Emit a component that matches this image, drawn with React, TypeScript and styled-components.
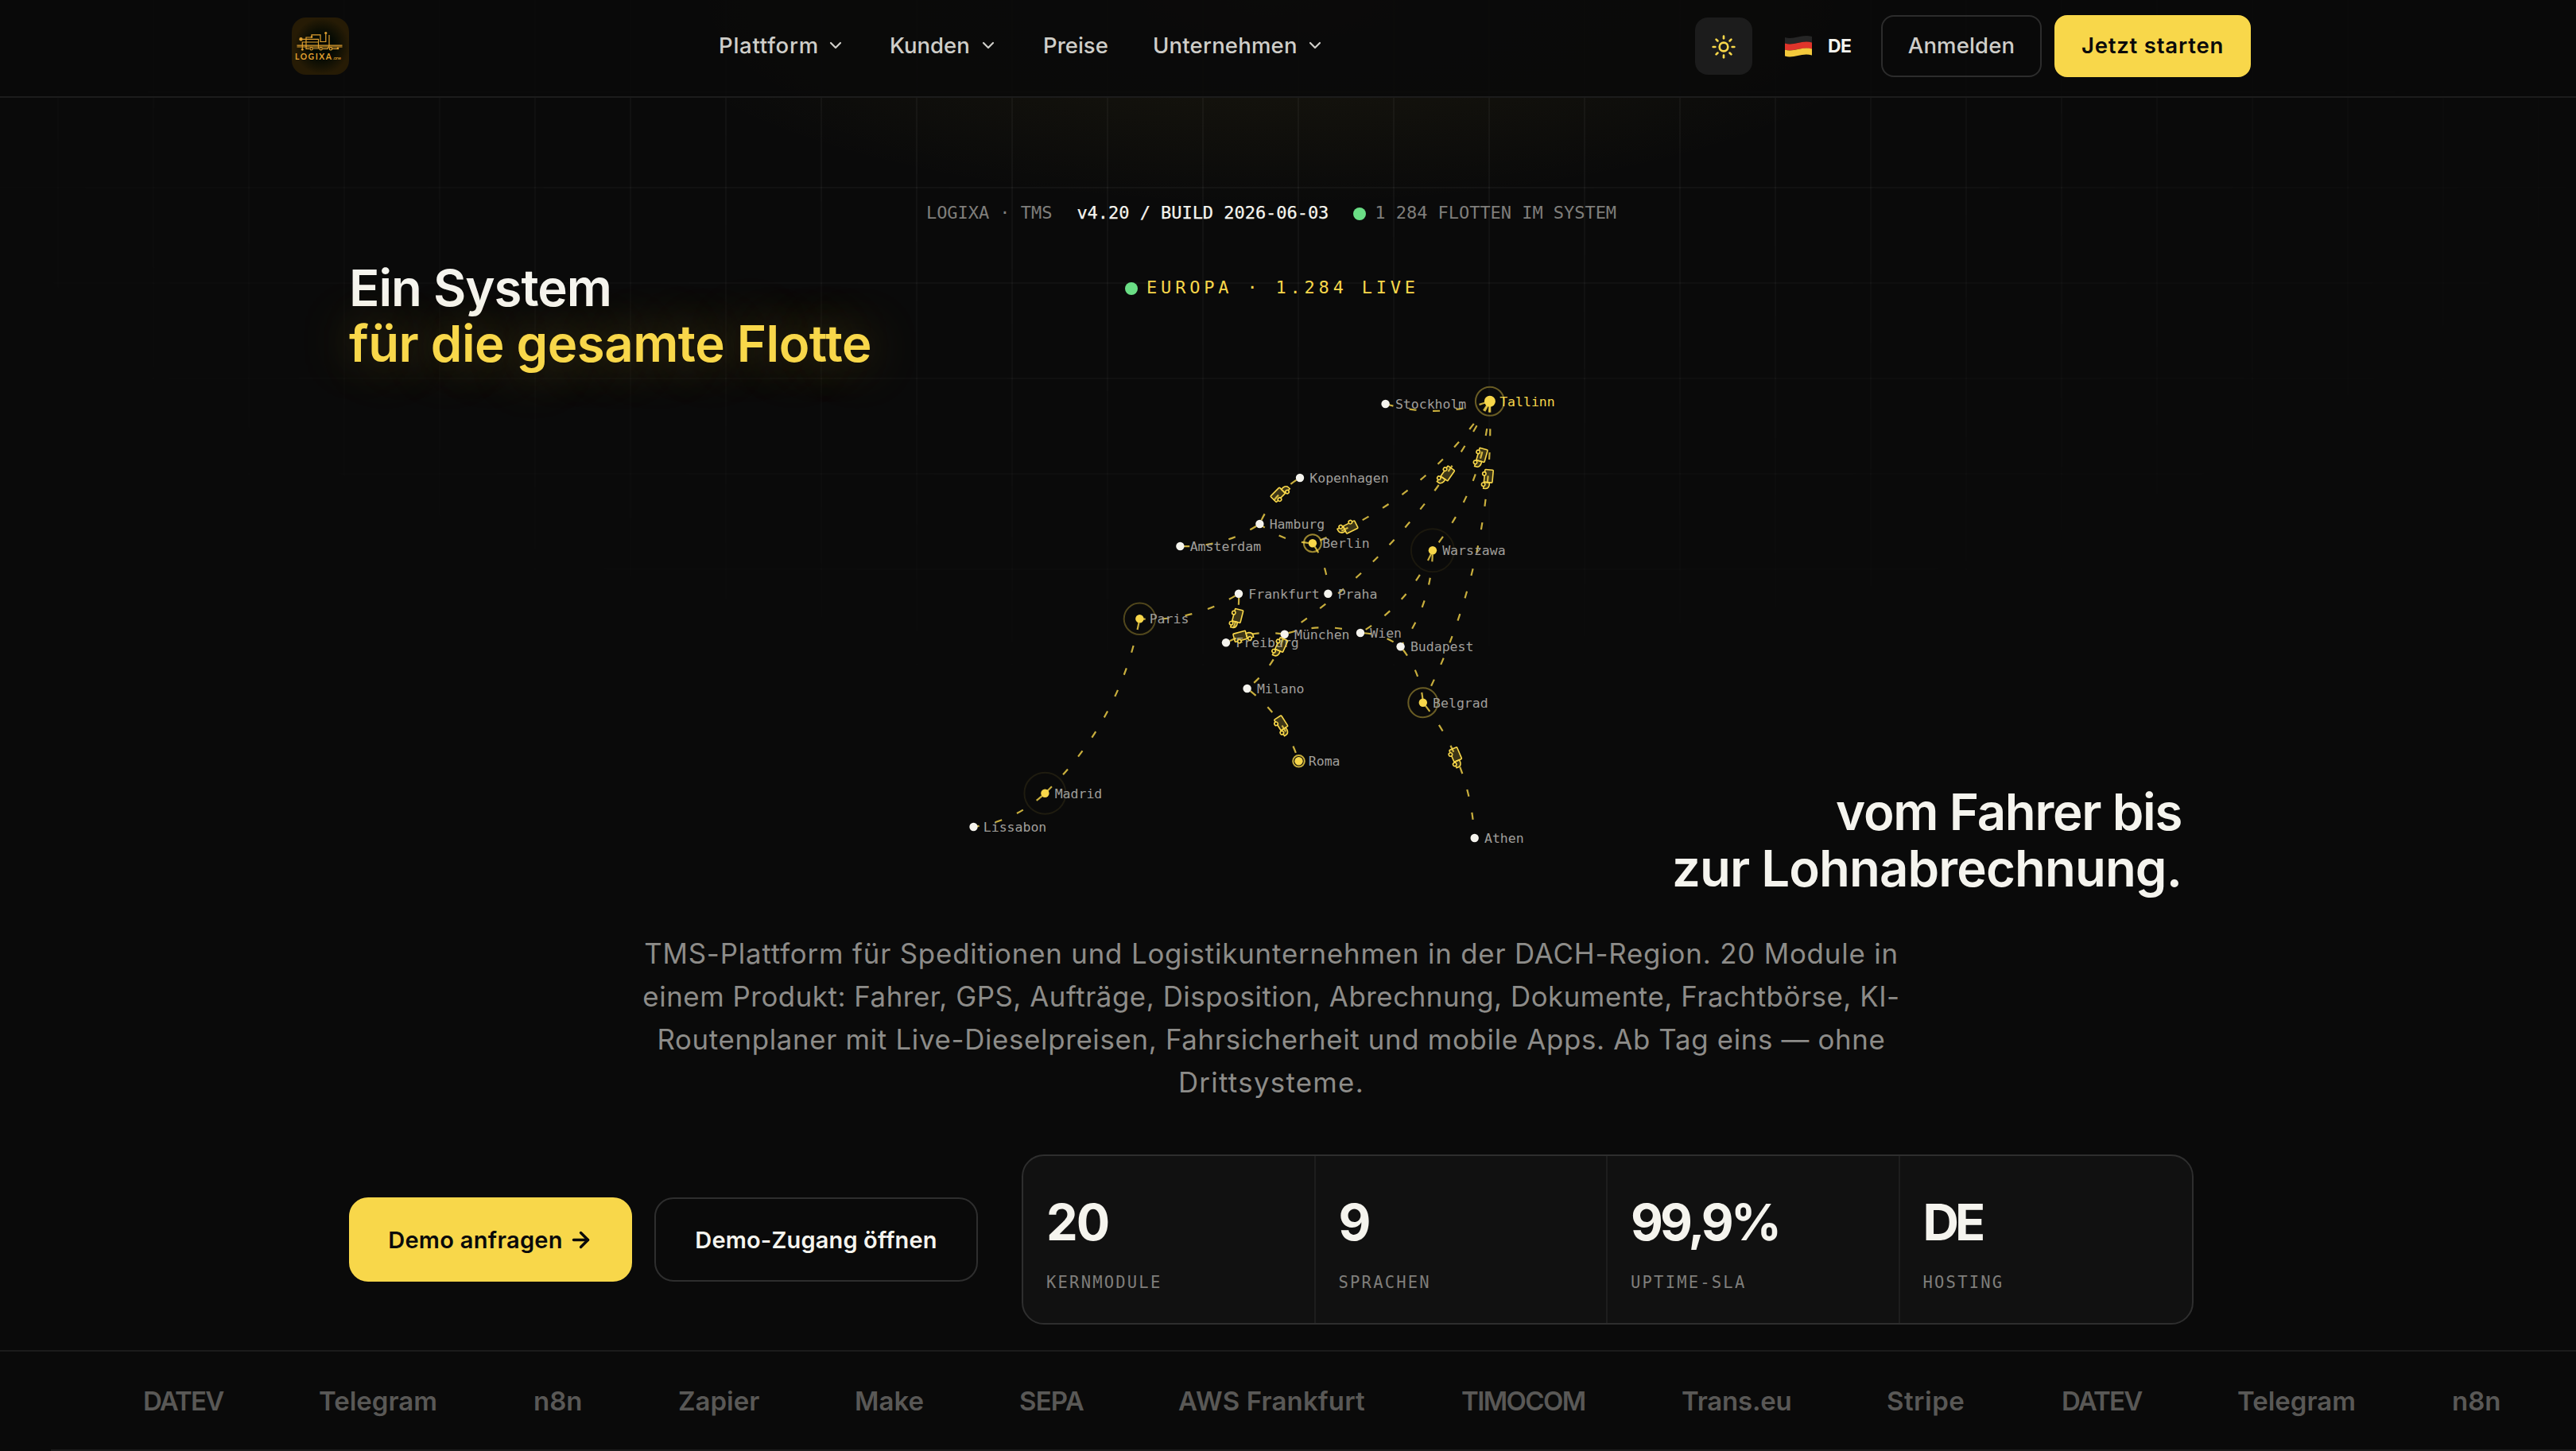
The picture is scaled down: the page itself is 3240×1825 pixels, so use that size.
import React from 'react';
import styled, { createGlobalStyle } from 'styled-components';
import { ArrowRight, ChevronDown, Sun } from 'lucide-react';

const YELLOW = '#f8d74a';
const INK = '#0a0a0a';
const PAPER = '#f5f4ee';
const GREEN = '#6ade85';
const SANS = `Inter, 'Open Sans', sans-serif`;
const MONO = `'DejaVu Sans Mono', 'Liberation Mono', monospace`;

const GlobalStyle = createGlobalStyle`
  * { box-sizing: border-box; }
  body {
    margin: 0;
    background: ${INK};
    color: ${PAPER};
    font-family: ${SANS};
    overflow: hidden;
  }
`;

const Page = styled.div`
  position: relative;
  display: flex;
  flex-direction: column;
  width: 3240px;
  height: 1825px;
  overflow: hidden;
`;

const Backdrop = styled.div`
  position: absolute;
  inset: 0;
  background-image:
    linear-gradient(to right, rgba(255, 255, 255, 0.04) 2px, transparent 2px),
    linear-gradient(to bottom, rgba(255, 255, 255, 0.04) 2px, transparent 2px);
  background-size: 120px 120px;
  background-position: 72px -5px;
  mask-image: radial-gradient(ellipse 1900px 920px at 1599px 0, #000 30%, transparent 100%);
`;

const Glow = styled.div`
  position: absolute;
  inset: 0;
  background: radial-gradient(ellipse 820px 260px at 1599px 0, rgba(248, 215, 74, 0.075), transparent 100%);
`;

/* header */

const Header = styled.header`
  position: relative;
  display: flex;
  justify-content: space-between;
  align-items: center;
  height: 123px;
  padding: 0 409px 5px 367px;
  background: rgba(10, 10, 10, 0.92);
  border-bottom: 2px solid #1c1c1c;
`;

const Logo = styled.svg`
  width: 72px;
  height: 72px;
  border-radius: 18px;
`;

const Nav = styled.nav`
  display: flex;
  align-items: center;
  width: 1228px;
  margin-left: 465px;
  padding-bottom: 2px;
`;

const NavItem = styled.a<{ $width: number; $gap: number; $ls: number }>`
  display: flex;
  align-items: center;
  justify-content: space-between;
  flex: none;
  width: ${p => p.$width}px;
  margin-right: ${p => p.$gap}px;
  font-size: 27.5px;
  font-weight: 500;
  letter-spacing: ${p => p.$ls}px;
  color: #cfcec9;

  svg {
    margin-right: -4px;
  }
`;

const Actions = styled.div`
  display: flex;
  align-items: center;
`;

const ThemeButton = styled.button`
  display: flex;
  align-items: center;
  justify-content: center;
  width: 72px;
  height: 72px;
  padding: 2px 0 0;
  border: 0;
  border-radius: 16px;
  background: #1c1c1c;
  color: ${YELLOW};
`;

const Language = styled.div`
  display: flex;
  align-items: center;
  width: 162px;
  padding-left: 40px;
  gap: 19px;
  font-size: 23px;
  font-weight: 700;
  letter-spacing: -0.5px;
`;

const HeaderButton = styled.button<{ $primary?: boolean; $width: number; $ls: number }>`
  width: ${p => p.$width}px;
  height: 78px;
  margin-right: ${p => (p.$primary ? 0 : 16)}px;
  padding: 0 0 2px;
  border: 2px solid ${p => (p.$primary ? YELLOW : '#2c2c2c')};
  border-radius: 16px;
  background: ${p => (p.$primary ? YELLOW : 'transparent')};
  color: ${p => (p.$primary ? INK : '#cfcec9')};
  font-family: inherit;
  font-size: 27.5px;
  font-weight: ${p => (p.$primary ? 600 : 500)};
  letter-spacing: ${p => p.$ls}px;
  white-space: nowrap;
`;

/* hero */

const Hero = styled.main`
  position: relative;
  display: flex;
  flex-direction: column;
  align-items: center;
  width: 2320px;
  margin-left: 439px;
  padding-top: 129px;
`;

const MonoLine = styled.div<{ $color: string; $ls: number; $gap: number }>`
  display: flex;
  align-items: center;
  gap: ${p => p.$gap}px;
  height: 32px;
  font-family: ${MONO};
  font-size: 22px;
  line-height: 32px;
  letter-spacing: ${p => p.$ls}px;
  color: ${p => p.$color};
  white-space: pre;

  b {
    font-weight: 400;
    color: ${PAPER};
    -webkit-text-stroke: 0.25px ${PAPER};
  }
`;

const Live = styled.span`
  display: flex;
  align-items: center;
  gap: 11px;
`;

const Dot = styled.i`
  width: 16px;
  height: 16px;
  margin-top: 2px;
  border-radius: 50%;
  background: ${GREEN};
`;

const Stage = styled.div`
  display: grid;
  grid-template-columns: 751px 820px 749px;
  width: 2320px;
  height: 843px;
  padding-top: 43px;
`;

const Heading = styled.h1<{ $end?: boolean }>`
  align-self: ${p => (p.$end ? 'end' : 'start')};
  margin: 0;
  padding-right: ${p => (p.$end ? 15 : 0)}px;
  text-align: ${p => (p.$end ? 'right' : 'left')};
  font-size: 63.5px;
  font-weight: 600;
  line-height: 70.3px;
  white-space: nowrap;
`;

const HeadingLine = styled.span<{ $ls: number; $glow?: boolean }>`
  display: block;
  letter-spacing: ${p => p.$ls}px;
  color: ${p => (p.$glow ? YELLOW : PAPER)};
  text-shadow: ${p => (p.$glow ? '0 0 64px rgba(248, 215, 74, 0.35)' : 'none')};
`;

const MapColumn = styled.div`
  display: flex;
  flex-direction: column;
  align-items: center;
  padding-top: 19px;
`;

const MapSvg = styled.svg`
  width: 820px;
  height: 660px;
  margin-top: 52px;
  flex-shrink: 0;
`;

const Lead = styled.p`
  display: flex;
  flex-direction: column;
  align-items: center;
  margin: 45px 0 0;
  font-size: 34.8px;
  font-weight: 400;
  line-height: 54px;
  color: #8d8c89;
  white-space: nowrap;
`;

const LeadLine = styled.span<{ $ls: number }>`
  letter-spacing: ${p => p.$ls}px;
`;

const CtaRow = styled.div`
  display: flex;
  align-items: center;
  width: 2320px;
  margin-top: 64px;
`;

const CtaButton = styled.button<{ $primary?: boolean; $width: number; $ls: number }>`
  display: flex;
  align-items: center;
  justify-content: center;
  gap: 7px;
  width: ${p => p.$width}px;
  height: 106px;
  margin-right: 28px;
  padding: 0;
  border: 2px solid ${p => (p.$primary ? YELLOW : '#2e2e2e')};
  border-radius: 24px;
  background: ${p => (p.$primary ? YELLOW : 'transparent')};
  color: ${p => (p.$primary ? INK : PAPER)};
  font-family: inherit;
  font-size: 29px;
  font-weight: 600;
  letter-spacing: ${p => p.$ls}px;
  white-space: nowrap;
`;

const Stats = styled.div`
  display: grid;
  grid-template-columns: repeat(4, 1fr);
  width: 1474px;
  height: 214px;
  margin-left: 27px;
  border: 2px solid #2e2e2e;
  border-radius: 28px;
  background: #111;
`;

const Stat = styled.div`
  padding: 51px 0 0 29px;
  border-right: 2px solid #1e1e1e;

  &:last-child {
    border-right: 0;
  }
`;

const StatValue = styled.div<{ $ls: number }>`
  font-size: 63px;
  font-weight: 700;
  line-height: 64px;
  letter-spacing: ${p => p.$ls}px;
`;

const StatLabel = styled.div`
  margin-top: 30px;
  font-family: ${MONO};
  font-size: 20.5px;
  line-height: 28px;
  letter-spacing: 2.2px;
  color: #7f7e7b;
`;

/* integrations strip */

const Strip = styled.div`
  position: relative;
  display: flex;
  align-items: center;
  height: 127px;
  margin-top: 32px;
  padding: 0 0 2px 180px;
  border-top: 2px solid #1c1c1c;
  background: linear-gradient(#1c1c1c, #1c1c1c) 64px 100% / 100% 2px no-repeat;
`;

const StripItem = styled.span<{ $width: number; $ls: number }>`
  flex: none;
  width: ${p => p.$width}px;
  font-size: 33px;
  font-weight: 600;
  letter-spacing: ${p => p.$ls}px;
  color: #595856;
  white-space: nowrap;
`;

type City = {
  x: number;
  y: number;
  ring?: number;
  ringOpacity?: number;
};

const cities: Record<string, City> = {
  Stockholm: { x: 1742.6, y: 508 },
  Tallinn: { x: 1873.9, y: 504.7, ring: 18, ringOpacity: 0.4 },
  Kopenhagen: { x: 1635, y: 601 },
  Hamburg: { x: 1584.4, y: 659 },
  Amsterdam: { x: 1484.4, y: 687 },
  Berlin: { x: 1650.9, y: 683.3, ring: 11, ringOpacity: 0.6 },
  Warszawa: { x: 1801.9, y: 692.3, ring: 27, ringOpacity: 0.07 },
  Frankfurt: { x: 1558, y: 746.7 },
  Praha: { x: 1670.4, y: 746.7 },
  Paris: { x: 1433.4, y: 778.3, ring: 19.7, ringOpacity: 0.3 },
  München: { x: 1615.7, y: 797.7 },
  Wien: { x: 1711, y: 796 },
  Freiburg: { x: 1542, y: 808.3 },
  Budapest: { x: 1761.6, y: 813.3 },
  Milano: { x: 1568.6, y: 866 },
  Belgrad: { x: 1789.8, y: 883.7, ring: 18.5, ringOpacity: 0.4 },
  Roma: { x: 1633.5, y: 957.3, ring: 7.3, ringOpacity: 0.8 },
  Madrid: { x: 1314.4, y: 997.7, ring: 26, ringOpacity: 0.09 },
  Lissabon: { x: 1224.5, y: 1040 },
  Athen: { x: 1854.7, y: 1054 },
};

// from, to, position of the truck on the route (0..1)
const routes: [string, string, number?][] = [
  ['Tallinn', 'Stockholm'],
  ['Tallinn', 'Berlin', 0.838],
  ['Tallinn', 'München', 0.2745],
  ['Tallinn', 'Warszawa', 0.352],
  ['Tallinn', 'Belgrad', 0.248],
  ['Hamburg', 'Kopenhagen', 0.605],
  ['Hamburg', 'Amsterdam'],
  ['Berlin', 'Hamburg'],
  ['Berlin', 'Praha'],
  ['Frankfurt', 'Paris'],
  ['Frankfurt', 'Freiburg', 0.49],
  ['Freiburg', 'München', 0.307],
  ['München', 'Wien'],
  ['München', 'Milano', 0.208],
  ['Milano', 'Roma', 0.571],
  ['Warszawa', 'Wien'],
  ['Warszawa', 'Budapest'],
  ['Wien', 'Budapest'],
  ['Budapest', 'Belgrad'],
  ['Belgrad', 'Athen', 0.437],
  ['Paris', 'Madrid'],
  ['Madrid', 'Lissabon'],
];

const bend = (a: City, b: City) => {
  const dx = b.x - a.x;
  const dy = b.y - a.y;
  const len = Math.hypot(dx, dy);
  const k = Math.min(len * 0.16, 50) / len;
  return { x: (a.x + b.x) / 2 + dy * k, y: (a.y + b.y) / 2 - dx * k };
};

const Truck: React.FC<{ from: City; to: City; t: number }> = ({ from, to, t }) => {
  const c = bend(from, to);
  const u = 1 - t;
  const x = u * u * from.x + 2 * u * t * c.x + t * t * to.x;
  const y = u * u * from.y + 2 * u * t * c.y + t * t * to.y;
  const angle =
    (Math.atan2(u * (c.y - from.y) + t * (to.y - c.y), u * (c.x - from.x) + t * (to.x - c.x)) * 180) / Math.PI;

  return (
    <g
      transform={`translate(${x} ${y}) rotate(${angle})`}
      fill="rgba(248, 215, 74, 0.22)"
      stroke={YELLOW}
      strokeWidth="1.6"
    >
      <rect x="-12" y="-6" width="16" height="10.5" rx="1" />
      <path d="M4 -2.5 H7.5 Q12 -1.5 12 2 V4.5 H4 Z" />
      <circle cx="-6.5" cy="5" r="2.2" fill={INK} />
      <circle cx="7" cy="5" r="2.2" fill={INK} />
    </g>
  );
};

const EuropeMap: React.FC = () => (
  <MapSvg viewBox="1190 430 820 660">
    {routes.map(([from, to]) => {
      const a = cities[from];
      const b = cities[to];
      const c = bend(a, b);
      return (
        <path
          key={from + to}
          d={`M${a.x} ${a.y} Q${c.x} ${c.y} ${b.x} ${b.y}`}
          fill="none"
          stroke={YELLOW}
          strokeOpacity="0.8"
          strokeWidth="2.2"
          strokeDasharray="9 20.6"
          strokeDashoffset="-5"
        />
      );
    })}
    {Object.entries(cities).map(([name, c]) => {
      const capital = name === 'Tallinn';
      return (
        <g key={name}>
          {c.ring && (
            <circle cx={c.x} cy={c.y} r={c.ring} fill="none" stroke={YELLOW} strokeOpacity={c.ringOpacity} strokeWidth="2" />
          )}
          <circle cx={c.x} cy={c.y} r={capital ? 7 : 5.2} fill={c.ring ? YELLOW : PAPER} />
          <text
            x={c.x + 12.3}
            y={c.y + 5.9}
            fontFamily={MONO}
            fontSize="16.5"
            fill={capital ? YELLOW : '#a09f9b'}
          >
            {name}
          </text>
        </g>
      );
    })}
    {routes.map(([from, to, t]) => t && <Truck key={from + to} from={cities[from]} to={cities[to]} t={t} />)}
  </MapSvg>
);

const LogixaLogo: React.FC = () => (
  <Logo viewBox="0 0 72 72">
    <defs>
      <radialGradient id="logoBg" cx="0.52" cy="0.5" r="0.54">
        <stop offset="0" stopColor="#000903" />
        <stop offset="0.4" stopColor="#050a03" />
        <stop offset="0.9" stopColor="#261b05" />
      </radialGradient>
    </defs>
    <rect width="72" height="72" fill="url(#logoBg)" />
    <g fill="none" stroke="#e0a030" strokeWidth="1.2">
      <path d="M6.5 35.2 H63.5 M6.5 37 H63.5" />
      <path d="M13 27.3 H33.5 V39 H27" />
      <path d="M18 37 V25 H25 V21.8 H36 V30.5 H42.8 V21" />
      <path d="M47 22 V36 L45 39.3 H39" />
      <path d="M13.3 39 V31 H33 M18 36 V39.3 H22" />
      <path d="M51 39.3 H57" />
      <circle cx="11.5" cy="27.3" r="1.6" fill="#e0a030" />
      <circle cx="24.6" cy="39.3" r="1.7" />
      <circle cx="36.6" cy="39.3" r="1.7" />
      <circle cx="49" cy="39.3" r="1.7" />
    </g>
    <g fill="#e0a030">
      <circle cx="13.3" cy="40.3" r="1.4" />
      <circle cx="58" cy="38.9" r="1.3" />
      <circle cx="42.8" cy="19.5" r="1.6" />
      <circle cx="25" cy="24.5" r="1.3" />
      <text x="4" y="52.6" fontFamily="Lato, sans-serif" fontSize="10.4" fontWeight="700" textLength="46">LOGIXA</text>
      <text x="51.5" y="52.6" fontFamily="Lato, sans-serif" fontSize="6" textLength="10.5">.one</text>
    </g>
  </Logo>
);

const GermanFlag: React.FC = () => (
  <svg width="36" height="28" viewBox="0 0 36 28">
    <path d="M1 3 C12 7 22 -2 35 2 V10 C22 6 12 14 1 10.5 Z" fill="#262626" />
    <path d="M1 10.5 C12 14 22 6 35 9.5 V18 C22 14 12 22 1 18.5 Z" fill="#e0352b" />
    <path d="M1 18.5 C12 22 22 14 35 17.5 V25.5 C22 22 12 30 1 26.5 Z" fill="#f3c93c" />
  </svg>
);

const navItems = [
  { label: 'Plattform', width: 155, gap: 60, ls: 0.75, menu: true },
  { label: 'Kunden', width: 132, gap: 61, ls: 0, menu: true },
  { label: 'Preise', width: 80, gap: 58, ls: 0, menu: false },
  { label: 'Unternehmen', width: 212, gap: 0, ls: 0.2, menu: true },
];

const stats = [
  { value: '20', label: 'KERNMODULE', ls: -2 },
  { value: '9', label: 'SPRACHEN', ls: 0 },
  { value: '99,9%', label: 'UPTIME-SLA', ls: -3.8 },
  { value: 'DE', label: 'HOSTING', ls: -5 },
];

const partners = [
  { name: 'DATEV', width: 221, ls: -1.8 },
  { name: 'Telegram', width: 270, ls: 0 },
  { name: 'n8n', width: 182, ls: 0 },
  { name: 'Zapier', width: 222, ls: 0 },
  { name: 'Make', width: 207, ls: 0 },
  { name: 'SEPA', width: 200, ls: -0.8 },
  { name: 'AWS Frankfurt', width: 356, ls: 0.15 },
  { name: 'TIMOCOM', width: 277, ls: -1.6 },
  { name: 'Trans.eu', width: 258, ls: -0.2 },
  { name: 'Stripe', width: 220, ls: 0.5 },
  { name: 'DATEV', width: 221, ls: -1.8 },
  { name: 'Telegram', width: 270, ls: 0 },
  { name: 'n8n', width: 182, ls: 0 },
];

const App: React.FC = () => {
  return (
    <Page>
      <GlobalStyle />
      <Backdrop />
      <Glow />
      <Header>
        <LogixaLogo />
        <Nav>
          {navItems.map(item => (
            <NavItem key={item.label} $width={item.width} $gap={item.gap} $ls={item.ls}>
              {item.label}
              {item.menu && <ChevronDown size={24} strokeWidth={2.2} />}
            </NavItem>
          ))}
        </Nav>
        <Actions>
          <ThemeButton>
            <Sun size={32} />
          </ThemeButton>
          <Language>
            <GermanFlag />
            DE
          </Language>
          <HeaderButton $width={202} $ls={0.15}>Anmelden</HeaderButton>
          <HeaderButton $primary $width={247} $ls={0.8}>Jetzt starten</HeaderButton>
        </Actions>
      </Header>

      <Hero>
        <MonoLine $color="#7f7e7b" $ls={-0.04} $gap={31}>
          <span>LOGIXA · TMS</span>
          <b>v4.20 / BUILD 2026-06-03</b>
          <Live>
            <Dot />
            1 284 FLOTTEN IM SYSTEM
          </Live>
        </MonoLine>

        <Stage>
          <Heading>
            <HeadingLine $ls={-1}>Ein System</HeadingLine>
            <HeadingLine $ls={-0.5} $glow>für die gesamte Flotte</HeadingLine>
          </Heading>
          <MapColumn>
            <MonoLine $color={YELLOW} $ls={4.8} $gap={11}>
              <Dot />
              <span>EUROPA · 1.284 LIVE</span>
            </MonoLine>
            <EuropeMap />
          </MapColumn>
          <Heading as="h2" $end>
            <HeadingLine $ls={-1.3}>vom Fahrer bis</HeadingLine>
            <HeadingLine $ls={-0.9}>zur Lohnabrechnung.</HeadingLine>
          </Heading>
        </Stage>

        <Lead>
          <LeadLine $ls={0.84}>TMS-Plattform für Speditionen und Logistikunternehmen in der DACH-Region. 20 Module in</LeadLine>
          <LeadLine $ls={0.56}>einem Produkt: Fahrer, GPS, Aufträge, Disposition, Abrechnung, Dokumente, Frachtbörse, KI-</LeadLine>
          <LeadLine $ls={0.69}>Routenplaner mit Live-Dieselpreisen, Fahrsicherheit und mobile Apps. Ab Tag eins — ohne</LeadLine>
          <LeadLine $ls={1.3}>Drittsysteme.</LeadLine>
        </Lead>

        <CtaRow>
          <CtaButton $primary $width={356} $ls={0.3}>
            Demo anfragen
            <ArrowRight size={31} strokeWidth={2.6} />
          </CtaButton>
          <CtaButton $width={407} $ls={0.15}>Demo-Zugang öffnen</CtaButton>
          <Stats>
            {stats.map(s => (
              <Stat key={s.label}>
                <StatValue $ls={s.ls}>{s.value}</StatValue>
                <StatLabel>{s.label}</StatLabel>
              </Stat>
            ))}
          </Stats>
        </CtaRow>
      </Hero>

      <Strip>
        {partners.map((p, i) => (
          <StripItem key={i} $width={p.width} $ls={p.ls}>{p.name}</StripItem>
        ))}
      </Strip>
    </Page>
  );
};

export default App;
